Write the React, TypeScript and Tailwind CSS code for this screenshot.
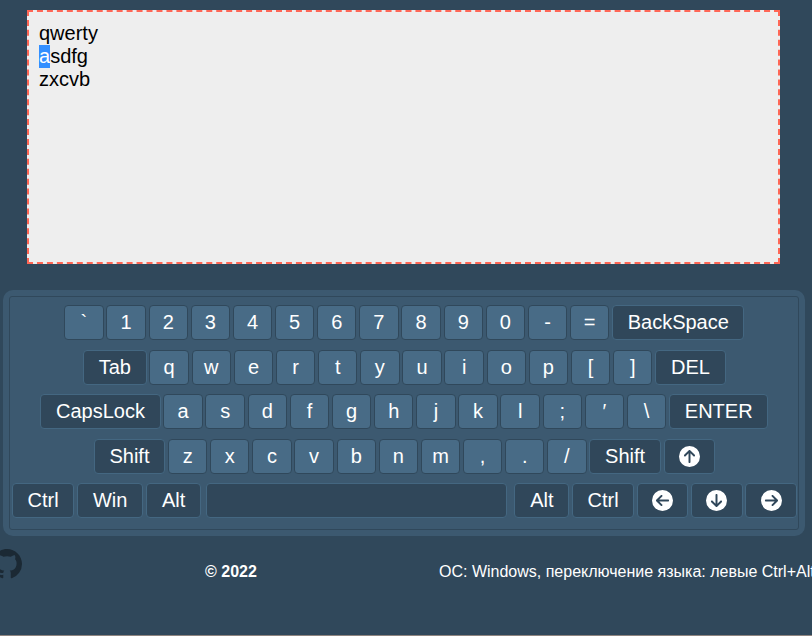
import { BsGithub } from "react-icons/bs";
import { FaCircleArrowUp, FaCircleArrowLeft, FaCircleArrowDown, FaCircleArrowRight } from "react-icons/fa6";
import type { ReactNode } from "react";

function Letter({ children }: { children: ReactNode }) {
  return (
    <button className="flex h-[35px] w-[39.4px] shrink-0 items-center justify-center rounded border border-[#30485b] bg-[#486b86]">
      {children}
    </button>
  );
}

function Special({ width, children }: { width: string; children?: ReactNode }) {
  return (
    <button className={`flex h-[35px] shrink-0 items-center justify-center rounded border border-[#446781] bg-[#30475a] ${width}`}>
      {children}
    </button>
  );
}

function Row({ children }: { children: ReactNode }) {
  return <div className="flex justify-center gap-[2.76px] pl-[0.7px]">{children}</div>;
}

function Letters({ keys }: { keys: string }) {
  return (
    <>
      {keys.split("").map((k) => (
        <Letter key={k}>{k}</Letter>
      ))}
    </>
  );
}

export default function App() {
  return (
    <div className="h-[636px] w-[812px] overflow-hidden border-b border-[#8f8580] bg-[#30485b] pt-[10px] font-['Liberation_Sans',Arial,sans-serif] text-white">
      <div className="ml-[27px] h-[254px] w-[753px] border-2 border-dashed border-[#ff6655] bg-[#eeeeee] px-[10px] py-[10px] text-[20px] leading-[23px] text-black">
        <div>qwerty</div>
        <div className="flex">
          <span className="h-[23px] bg-[#338fff] text-white">a</span>
          <span>sdfg</span>
        </div>
        <div>zxcvb</div>
      </div>

      <div className="mt-[26px] ml-[3px] h-[246px] w-[802px] rounded-[10px] bg-[#3c5970] p-[6px]">
        <div className="flex h-[234px] w-[790px] flex-col gap-[9.52px] rounded-[3px] border border-[#30485b] pt-[8px] text-[20px] leading-[23px]">
          <Row>
            <Letters keys="`1234567890-=" />
            <Special width="w-[132.4px]">BackSpace</Special>
          </Row>
          <Row>
            <Special width="w-[63.8px]">Tab</Special>
            <Letters keys="qwertyuiop[]" />
            <Special width="w-[70.6px]">DEL</Special>
          </Row>
          <Row>
            <Special width="w-[120.3px]">CapsLock</Special>
            <Letters keys="asdfghjkl;′\" />
            <Special width="w-[99.4px]">ENTER</Special>
          </Row>
          <Row>
            <Special width="w-[71.5px]">Shift</Special>
            <Letters keys="zxcvbnm,./" />
            <Special width="w-[71.5px]">Shift</Special>
            <Special width="w-[51.4px]"><FaCircleArrowUp size={21} /></Special>
          </Row>
          <Row>
            <Special width="w-[62.3px]">Ctrl</Special>
            <Special width="w-[66.4px]">Win</Special>
            <Special width="w-[54.8px]">Alt</Special>
            <Special width="ml-[2.5px] mr-[5px] w-[300.5px]" />
            <Special width="w-[54.8px]">Alt</Special>
            <Special width="w-[62.3px]">Ctrl</Special>
            <Special width="w-[51.4px]"><FaCircleArrowLeft size={21} className="mb-px" /></Special>
            <Special width="w-[51.4px]"><FaCircleArrowDown size={21} className="mb-px" /></Special>
            <Special width="w-[51.4px]"><FaCircleArrowRight size={21} className="mb-px" /></Special>
          </Row>
        </div>
      </div>

      <footer className="flex items-start pt-[13px] text-[16px] leading-[18px] whitespace-nowrap">
        <BsGithub size={30} className="-ml-[8px] shrink-0 text-[#1b2934]" />
        <span className="mt-[14px] ml-[183px] w-[234px] shrink-0 font-bold">© 2022</span>
        <span className="mt-[14px]">ОС: Windows, переключение языка: левые Ctrl+Alt</span>
      </footer>
    </div>
  );
}
